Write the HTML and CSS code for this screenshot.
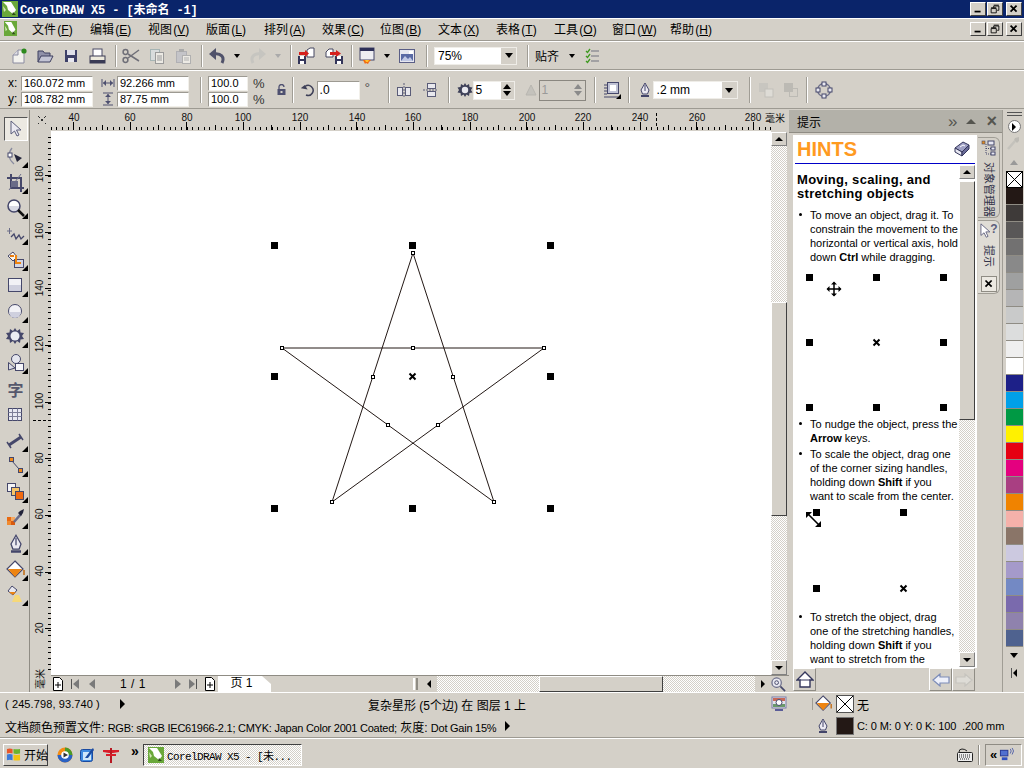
FILE: index.html
```html
<!DOCTYPE html>
<html lang="zh-CN">

<head>
    <meta charset="UTF-8">
    <title>CorelDRAW X5</title>
    <link rel="stylesheet" href="styles.css">
</head>

<body>
    <svg class="defs" xmlns="http://www.w3.org/2000/svg">
        <symbol id="logo" viewBox="0 0 16 16" preserveAspectRatio="none"><rect width="16" height="16" fill="#6aa83a"/><path d="M1 1 L9 1 L14 9 L11 13 L6 9 L5 5Z" fill="#fff"/><path d="M11 11 L14 14 L10 14Z" fill="#2c4a18"/><path d="M1 5 L4 9 L2 11Z" fill="#d5e8b8"/></symbol>
        <symbol id="min" viewBox="0 0 16 14"><rect x="4" y="9" width="7" height="2" fill="#000"/></symbol>
        <symbol id="max" viewBox="0 0 16 14"><path d="M6.5 3.5h6v5h-2M6.5 2.5h6" fill="none" stroke="#000"/><path d="M6.5 3.5v2" stroke="#000"/><path d="M3.5 6.5h6v5h-6z M3.5 5.5h6" fill="none" stroke="#000"/></symbol>
        <symbol id="close" viewBox="0 0 16 14"><path d="M4 3 L11 10 M11 3 L4 10" stroke="#000" stroke-width="2"/></symbol>
        <symbol id="new" viewBox="0 0 18 18"><path d="M3 8 L8 3 H14 V16 H3Z" fill="#f3f2ee" stroke="#8a8ba0"/><path d="M3 8h5V3" fill="#dcdbe2" stroke="#8a8ba0"/><circle cx="14" cy="4" r="2.6" fill="#2d8a1e"/></symbol>
        <symbol id="open" viewBox="0 0 18 18"><path d="M2 15V4h5l1.5 2H14v3" fill="#8f90a8" stroke="#3f4060"/><path d="M2 15 L5 9 H17 L14 15Z" fill="#c3c4d4" stroke="#3f4060"/></symbol>
        <symbol id="save" viewBox="0 0 18 18"><rect x="3" y="3" width="12" height="12" fill="#3d4068"/><rect x="5" y="3" width="8" height="5" fill="#dfe0ea"/><rect x="6" y="11" width="6" height="4" fill="#e8e8f0"/></symbol>
        <symbol id="print" viewBox="0 0 18 18"><rect x="5" y="2" width="9" height="8" fill="#fff" stroke="#4a4b66"/><rect x="2" y="9" width="15" height="7" fill="#ece9dc" stroke="#3a3b55"/><rect x="2" y="13" width="15" height="3" fill="#3a3b55"/></symbol>
        <symbol id="cut" viewBox="0 0 18 18"><path d="M6 7 L17 14 M6 11 L17 3" stroke="#6f6f78" stroke-width="1.5"/><circle cx="3.5" cy="5" r="2.4" fill="none" stroke="#6f6f78" stroke-width="1.5"/><circle cx="3.5" cy="13" r="2.4" fill="none" stroke="#6f6f78" stroke-width="1.5"/></symbol>
        <symbol id="copy" viewBox="0 0 18 18"><rect x="2.500" y="2.500" width="9" height="11" fill="#d8dcdc" stroke="#a5b4b4"/><rect x="7.500" y="5.500" width="8" height="11" fill="#eceae4" stroke="#9a9a9a"/><path d="M9 9h5M9 11h5M9 13h5" stroke="#9a9a9a"/></symbol>
        <symbol id="paste" viewBox="0 0 18 18"><rect x="2.500" y="4.500" width="10" height="11" fill="#c4c4c8" stroke="#b0b0b4"/><rect x="5" y="2" width="5" height="3" fill="#aaa"/><rect x="8.500" y="8.500" width="8" height="8" fill="#eceae4" stroke="#b0b0b0"/><path d="M10 11h5M10 13h5" stroke="#b0b0b0"/></symbol>
        <symbol id="undo" viewBox="0 0 18 18"><path d="M14 16 C17 10 13 6 6 7" fill="none" stroke="#50526a" stroke-width="3"/><path d="M1 7 L8 1 V13Z" fill="#50526a"/></symbol>
        <symbol id="redo" viewBox="0 0 18 18"><path d="M4 16 C1 10 5 6 12 7" fill="none" stroke="#c6c5c0" stroke-width="3"/><path d="M17 7 L10 1 V13Z" fill="#c6c5c0"/></symbol>
        <symbol id="import" viewBox="0 0 18 18"><path d="M10 3 L13 1 H17 V10 H10Z" fill="#fff" stroke="#444660"/><rect x="1" y="9" width="8" height="8" fill="#34365a"/><rect x="3" y="9" width="4" height="3" fill="#fff"/><rect x="3" y="14" width="4" height="3" fill="#fff"/><path d="M2 5h6V3l4 3.500-4 3.500V8H2Z" fill="#d6201c"/></symbol>
        <symbol id="export" viewBox="0 0 18 18"><path d="M1 5 L4 2 H8 V10 H1Z" fill="#fff" stroke="#444660"/><rect x="10" y="9" width="8" height="8" fill="#34365a"/><rect x="12" y="9" width="4" height="3" fill="#fff"/><rect x="12" y="14" width="4" height="3" fill="#fff"/><path d="M5 5h6V3l5 3.500-5 3.500V8H5Z" fill="#d6201c"/></symbol>
        <symbol id="launch" viewBox="0 0 18 18"><rect x="2" y="1" width="14" height="12" fill="#eeeef2" stroke="#45476a"/><rect x="2" y="1" width="14" height="3" fill="#2e3058"/><path d="M5 13h8l-2 2 -1 2-2-1-1 1Z" fill="#f26a10"/><path d="M7 13h4l-1 2H8Z" fill="#ffc02a"/></symbol>
        <symbol id="welcome" viewBox="0 0 18 18"><rect x="1.500" y="2.500" width="15" height="13" fill="#e6e7ef" stroke="#5a5e86"/><rect x="3" y="7" width="12" height="7" fill="#5a6aa4"/><path d="M3 14 L7 9 L10 12 L12 10 L15 14Z" fill="#c0c8e4"/><rect x="11" y="4" width="4" height="3" fill="#fff"/></symbol>
        <symbol id="checks" viewBox="0 0 14 16"><path d="M6 3h8M6 8h8M6 13h8" stroke="#70727e"/><path d="M1 3l1.500 1.500L5 1M1 8l1.500 1.500L5 6M1 13l1.500 1.500L5 11" fill="none" stroke="#3f9a20" stroke-width="1.300"/></symbol>
        <symbol id="wid" viewBox="0 0 14 14"><path d="M1 3v8M13 3v8M2 7h10" stroke="#4e5070"/><path d="M2 7l3-3v6ZM12 7l-3-3v6Z" fill="#4e5070"/></symbol>
        <symbol id="hei" viewBox="0 0 14 14"><path d="M2 1h10M2 13h10M7 2v10" stroke="#4e5070"/><path d="M7 2l-3 3h6ZM7 12l-3-3h6Z" fill="#4e5070"/></symbol>
        <symbol id="lock" viewBox="0 0 12 12"><rect x="1.500" y="5" width="8" height="6" fill="#4e5070"/><path d="M3 5V3a2.500 2.500 0 0 1 5 0" fill="none" stroke="#4e5070" stroke-width="1.300"/><rect x="4.500" y="7" width="2" height="2" fill="#d4d0c8"/></symbol>
        <symbol id="rotate" viewBox="0 0 14 14"><path d="M4 3.500 A5 5 0 1 1 5 12" fill="none" stroke="#3e4058" stroke-width="1.500"/><path d="M0 6h7L3.500 2Z" fill="#3e4058" transform="rotate(10 4 4)"/></symbol>
        <symbol id="mirh" viewBox="0 0 16 16"><rect x="1.500" y="5.500" width="5" height="8" fill="#e8e8ee" stroke="#5a5c78"/><rect x="9.500" y="5.500" width="5" height="8" fill="#e8e8ee" stroke="#5a5c78"/><path d="M8 1v14" stroke="#5a5c78" stroke-dasharray="2 1"/></symbol>
        <symbol id="mirv" viewBox="0 0 16 16"><rect x="5.500" y="1.500" width="8" height="5" fill="#e8e8ee" stroke="#5a5c78"/><rect x="5.500" y="9.500" width="8" height="5" fill="#e8e8ee" stroke="#5a5c78"/><path d="M1 8h14" stroke="#5a5c78" stroke-dasharray="2 1"/></symbol>
        <symbol id="gear" viewBox="0 0 16 16"><path d="M8 1l1.500 2.500L12 2l.5 3 3 .5-1.500 2.500 1.500 2.500-3 .5-.5 3-2.500-1.500L8 15l-1.500-2.500L4 14l-.5-3-3-.5L2 8 .5 5.500l3-.5L4 2l2.500 1.500Z" fill="#3e4058"/><circle cx="8" cy="8" r="3.200" fill="#e8e8ee"/></symbol>
        <symbol id="tri" viewBox="0 0 12 12"><path d="M6 1 L11 11 H1Z" fill="#c4c2bc" stroke="#b8b6b0"/></symbol>
        <symbol id="wrap" viewBox="0 0 18 18"><path d="M1 4h3M1 7h3M1 10h3M1 13h3M1 16h14" stroke="#45476a"/><rect x="4.500" y="1.500" width="11" height="11" fill="#bfc2d4" stroke="#45476a"/><rect x="7" y="4" width="6" height="6" fill="#fff"/><path d="M18 13v5h-5Z" fill="#000"/></symbol>
        <symbol id="pen" viewBox="0 0 14 16"><path d="M7 1 L11 8 L9.500 12 H4.500 L3 8Z" fill="#eceaf2" stroke="#43456a"/><path d="M7 3v6" stroke="#43456a"/><rect x="3" y="13" width="8" height="2" fill="#43456a"/></symbol>
        <symbol id="comb1" viewBox="0 0 16 16"><rect x="1" y="1" width="9" height="9" fill="#c8c6c0"/><rect x="7" y="7" width="8" height="8" fill="#dedcd6" stroke="#c2c0ba"/></symbol>
        <symbol id="comb2" viewBox="0 0 16 16"><rect x="1" y="1" width="9" height="9" fill="#bcbab4"/><rect x="6.500" y="6.500" width="8" height="8" fill="none" stroke="#bcbab4"/></symbol>
        <symbol id="nodes" viewBox="0 0 18 18"><circle cx="9" cy="9" r="6.500" fill="none" stroke="#6a6c88" stroke-width="1.300"/><rect x="7" y="1" width="4" height="4" fill="#e8e8f0" stroke="#45476a"/><rect x="7" y="13" width="4" height="4" fill="#e8e8f0" stroke="#45476a"/><rect x="1" y="7" width="4" height="4" fill="#e8e8f0" stroke="#45476a"/><rect x="13" y="7" width="4" height="4" fill="#e8e8f0" stroke="#45476a"/></symbol>
        <symbol id="t-arrow" viewBox="0 0 20 20"><path d="M5 2 L5 15 L8.500 12 L11 17 L13 16 L10.500 11 L15 11Z" fill="#eceaf2" stroke="#5c5e7c"/></symbol>
        <symbol id="t-shape" viewBox="0 0 20 20"><path d="M6 1 C2 6 2 12 8 17" fill="none" stroke="#8a8ca0" stroke-width="1.300"/><rect x="2" y="6" width="4" height="4" fill="#fff" stroke="#45476a"/><path d="M8 7 L16 11 L11 15Z" fill="#23243a"/></symbol>
        <symbol id="t-crop" viewBox="0 0 20 20"><path d="M5 1v14h13M1 5h14v14" fill="none" stroke="#45476a" stroke-width="2"/><path d="M15 1 L3 17" stroke="#6a6c88"/><rect x="5" y="8" width="7" height="6" fill="#6a6c88"/></symbol>
        <symbol id="t-zoom" viewBox="0 0 20 20"><circle cx="8" cy="8" r="6" fill="#d8d9e4" stroke="#45476a" stroke-width="1.500"/><path d="M3 8a5 5 0 0 1 10 0Z" fill="#fff"/><path d="M12 12 L18 18" stroke="#111" stroke-width="2.500"/></symbol>
        <symbol id="t-free" viewBox="0 0 20 20"><path d="M1 7h5M3.500 4v6" stroke="#6a6c88"/><path d="M5 13 L8 10 L10 15 L13 11 L15 15 L18 12" fill="none" stroke="#45476a" stroke-width="1.300"/></symbol>
        <symbol id="t-smart" viewBox="0 0 20 20"><path d="M2 6 L7 2 L11 7 L7 11Z" fill="#f6f4ee" stroke="#45476a"/><path d="M4 6h4" stroke="#e67a12" stroke-width="2"/><rect x="8.500" y="9.500" width="9" height="8" fill="#d4d6e4" stroke="#45476a"/><path d="M10 5v8h5" fill="none" stroke="#ee8410" stroke-width="2"/></symbol>
        <symbol id="t-rect" viewBox="0 0 20 20"><rect x="2.500" y="2.500" width="13" height="13" fill="#f2f2f6" stroke="#45476a"/><rect x="3" y="9" width="12" height="6" fill="#cfd0de"/></symbol>
        <symbol id="t-ell" viewBox="0 0 20 20"><circle cx="9" cy="9" r="6.500" fill="#f2f2f6" stroke="#45476a"/><path d="M3 10h12a6 6 0 0 1-12 0Z" fill="#cfd0de"/></symbol>
        <symbol id="t-poly" viewBox="0 0 20 20"><path d="M9 1l2 3 3-2 .5 3.500 3.500.5-2 3 2 3-3.500.5-.5 3.500-3-2-2 3-2-3-3 2-.5-3.500L0 12l2-3-2-3 3.500-.5L4 2l3 2Z" fill="#45476a"/><circle cx="9" cy="9" r="4.500" fill="#ebecf3"/></symbol>
        <symbol id="t-basic" viewBox="0 0 20 20"><circle cx="10" cy="6" r="4.500" fill="#e4e5ee" stroke="#45476a"/><path d="M2.500 9.500 L9 15 L2.500 17Z" fill="#d8d9e4" stroke="#45476a"/><rect x="9.500" y="10.500" width="8" height="7" fill="#f6f6fa" stroke="#45476a"/></symbol>
        <symbol id="t-table" viewBox="0 0 20 20"><rect x="2.500" y="3.500" width="13" height="12" fill="#e8e9f2" stroke="#45476a"/><path d="M2.500 7.500h13M2.500 11.500h13M6.500 3.500v12M11.500 3.500v12" stroke="#7c7e98"/></symbol>
        <symbol id="t-dim" viewBox="0 0 20 20"><path d="M3 14 L15 6" stroke="#45476a" stroke-width="3"/><path d="M1 11l4 6M13 3l4 6" stroke="#45476a" stroke-width="1.500"/></symbol>
        <symbol id="t-conn" viewBox="0 0 20 20"><rect x="3.500" y="1.500" width="4" height="4" fill="#f08a1a" stroke="#45476a"/><rect x="12.500" y="12.500" width="4" height="4" fill="#f08a1a" stroke="#45476a"/><path d="M6 5 L13 13" stroke="#45476a"/></symbol>
        <symbol id="t-blend" viewBox="0 0 20 20"><rect x="1.500" y="1.500" width="8" height="8" fill="#f4f4f6" stroke="#45476a"/><rect x="5.500" y="5.500" width="8" height="8" fill="#f6c468" stroke="#45476a"/><rect x="9.500" y="9.500" width="8" height="8" fill="#f06a10" stroke="#45476a"/></symbol>
        <symbol id="t-drop" viewBox="0 0 20 20"><rect x="1" y="9" width="4" height="4" fill="#e86a12"/><rect x="5" y="9" width="4" height="4" fill="#f6a860"/><rect x="1" y="13" width="4" height="4" fill="#f08a30"/><rect x="5" y="13" width="4" height="4" fill="#d85a10"/><path d="M8 14 L15 6" stroke="#6a6c88" stroke-width="2.500"/><path d="M14 3 L18 1 L17 5 L15 8 L12 5Z" fill="#23243a"/></symbol>
        <symbol id="bucket" viewBox="0 0 20 20"><path d="M9 1 L17 9 L9 17 L1 9Z" fill="#fff" stroke="#45476a" stroke-width="1.200"/><path d="M2 9h14l-7 8Z" fill="#ee8410"/><path d="M18 10v5" stroke="#c26a10" stroke-width="1.500"/></symbol>
        <symbol id="t-ifill" viewBox="0 0 20 20"><path d="M6 1 L11 5 L7 10 L2 6Z" fill="#e8e8f0" stroke="#45476a"/><path d="M3 7h7l-3 3Z" fill="#ee8410"/><path d="M9 10h4l3 7H6Z" fill="#f6d878"/></symbol>
        <symbol id="page" viewBox="0 0 12 14"><path d="M1.500 .5H7.500L10.500 3.500V13.500H1.500Z" fill="#fff" stroke="#000"/><path d="M6 5v6M3 8h6" stroke="#000"/></symbol>
        <symbol id="zoomctl" viewBox="0 0 16 16"><circle cx="6" cy="6" r="5" fill="#e8e8f0" stroke="#6a6c88" stroke-width="1.300"/><circle cx="6" cy="6" r="2" fill="none" stroke="#45476a"/><path d="M10 10 L15 15" stroke="#45476a" stroke-width="1.800"/></symbol>
        <symbol id="home" viewBox="0 0 18 18"><path d="M1 9 L9 1 L17 9 H14 V16 H4 V9Z" fill="#fff" stroke="#35375c" stroke-width="1.400"/><path d="M4 9h10" stroke="#35375c"/></symbol>
        <symbol id="back" viewBox="0 0 18 14"><path d="M1 7 L8 1 V4 H17 V10 H8 V13Z" fill="#eef0fa" stroke="#7c8cb8" stroke-width="1.200"/></symbol>
        <symbol id="fwd" viewBox="0 0 18 14"><path d="M17 7 L10 1 V4 H1 V10 H10 V13Z" fill="#dedcd6" stroke="#c6c4be" stroke-width="1.200"/></symbol>
        <symbol id="book" viewBox="0 0 16 16"><path d="M1 7 L9 1 L15 4 L8 11Z" fill="#9ea0c4" stroke="#33355a"/><path d="M1 7 L8 11 V15 L1 11Z" fill="#e8e8f2" stroke="#33355a"/><path d="M8 11 L15 4 V8 L8 15Z" fill="#6a6c98" stroke="#33355a"/><path d="M6 6l3-2 2 1" fill="none" stroke="#fff"/></symbol>
        <symbol id="mgr" viewBox="0 0 16 16"><rect x="1" y="1" width="3" height="3" fill="#e08a20" stroke="#45476a" stroke-width=".6"/><rect x="7" y="1" width="6" height="4" fill="#e8e8f2" stroke="#45476a"/><rect x="10" y="7" width="4" height="3" fill="#e8e8f2" stroke="#45476a"/><rect x="10" y="12" width="4" height="3" fill="#e8e8f2" stroke="#45476a"/><path d="M5 4v10h5M5 8.500h5" fill="none" stroke="#45476a" stroke-dasharray="1 1"/></symbol>
        <symbol id="help" viewBox="0 0 12 18"><path d="M2 1 L2 14 L5.500 11 L8 16 L10 15 L7.500 10 L12 10Z" fill="#fff" stroke="#5c5e7c"/></symbol>
        <symbol id="dropper" viewBox="0 0 14 14"><path d="M1 13 L8 5" stroke="#c4c2bc" stroke-width="2.500"/><path d="M8 2 L12 1 L12 5 L10 7 L7 4Z" fill="#bdbbb5"/></symbol>
        <symbol id="scope" viewBox="0 0 16 16"><rect x="1" y="1" width="14" height="11" fill="#e4e4ec" stroke="#7a7ca8"/><rect x="2" y="2" width="12" height="3" fill="#c86a5a"/><rect x="2" y="8" width="12" height="3" fill="#6a9a6a"/><circle cx="8" cy="6.500" r="3" fill="#fff" stroke="#45476a"/><rect x="4" y="13" width="8" height="2" fill="#5a5c98"/></symbol>
        <symbol id="flag" viewBox="0 0 16 16"><path d="M1 2q3-1 6 0v5q-3-1-6 0Z" fill="#e8572a"/><path d="M8 2q3 1 7 0v5q-4 1-7 0Z" fill="#6cb42e"/><path d="M1 8q3-1 6 0v6q-3-1-6 0Z" fill="#3b79d8"/><path d="M8 8q3 1 7 0v6q-4 1-7 0Z" fill="#f2c312"/></symbol>
        <symbol id="wmp" viewBox="0 0 16 16"><circle cx="8" cy="8" r="7.500" fill="#f48c14"/><path d="M8 .5A7.500 7.500 0 0 1 15.500 8H11A3 3 0 0 0 8 5Z" fill="#4a9a2a"/><path d="M.5 8A7.500 7.500 0 0 0 15.500 8H11a3 3 0 0 1-6 0Z" fill="#2a62c4"/><circle cx="8" cy="8" r="3.800" fill="#fff"/><path d="M6.500 5.500 L11 8 L6.500 10.500Z" fill="#333"/></symbol>
        <symbol id="ie" viewBox="0 0 16 16"><rect x="1.500" y="2.500" width="12" height="12" rx="2" fill="#3f8ae0" stroke="#1a4aa0"/><path d="M4 5h8v8H4Z" fill="#cfe6fa"/><path d="M6 11 L12 3 L14 1 L15 3 L9 11Z" fill="#1a4aa0"/></symbol>
        <symbol id="fly" viewBox="0 0 16 16"><path d="M0 3h16v2l-6 1H6L0 5Z" fill="#d81e2a"/><path d="M7 1h2v15H7Z" fill="#b81822"/><path d="M3 7h10v2H3Z" fill="#d81e2a"/></symbol>
        <symbol id="kbd" viewBox="0 0 16 16"><rect x=".5" y="5.500" width="15" height="9" rx="1" fill="#eee" stroke="#222"/><path d="M2 8h12M2 10h12M3 12h10" stroke="#222" stroke-dasharray="1 1"/><path d="M2 5q0-3 3-3t5 2" fill="none" stroke="#222"/></symbol>
        <symbol id="net" viewBox="0 0 16 16"><rect x="1" y="3" width="9" height="7" fill="#2a3a90"/><rect x="2" y="4" width="7" height="5" fill="#5070d0"/><rect x="3" y="11" width="6" height="3" fill="#3050c0"/><path d="M12 2q2 2 0 5M14 1q3 3 0 7" fill="none" stroke="#5060a8"/></symbol>
    </svg>

    <div class="app">
        <div class="titlebar">
            <svg class="title-logo"><use href="#logo"/></svg>
            <span class="title-text">CorelDRAW X5 - [未命名 -1]</span>
            <div class="win-btns">
                <span class="win-btn"><svg><use href="#min"/></svg></span>
                <span class="win-btn"><svg><use href="#max"/></svg></span>
                <span class="win-btn win-close"><svg><use href="#close"/></svg></span>
            </div>
        </div>

        <div class="menubar">
            <svg class="menu-logo"><use href="#logo"/></svg>
            <div class="menu">
                <span class="menu-item">文件 (<u>F</u>)</span>
                <span class="menu-item">编辑 (<u>E</u>)</span>
                <span class="menu-item">视图 (<u>V</u>)</span>
                <span class="menu-item">版面 (<u>L</u>)</span>
                <span class="menu-item">排列 (<u>A</u>)</span>
                <span class="menu-item">效果 (<u>C</u>)</span>
                <span class="menu-item">位图 (<u>B</u>)</span>
                <span class="menu-item">文本 (<u>X</u>)</span>
                <span class="menu-item">表格 (<u>T</u>)</span>
                <span class="menu-item">工具 (<u>O</u>)</span>
                <span class="menu-item">窗口 (<u>W</u>)</span>
                <span class="menu-item">帮助 (<u>H</u>)</span>
            </div>
            <div class="win-btns">
                <span class="win-btn"><svg><use href="#min"/></svg></span>
                <span class="win-btn"><svg><use href="#max"/></svg></span>
                <span class="win-btn win-close"><svg><use href="#close"/></svg></span>
            </div>
        </div>

        <div class="toolbar">
            <span class="tb"><svg class="ico"><use href="#new"/></svg></span>
            <span class="tb"><svg class="ico"><use href="#open"/></svg></span>
            <span class="tb"><svg class="ico"><use href="#save"/></svg></span>
            <span class="tb"><svg class="ico"><use href="#print"/></svg></span>
            <span class="sep"></span>
            <span class="tb"><svg class="ico"><use href="#cut"/></svg></span>
            <span class="tb"><svg class="ico"><use href="#copy"/></svg></span>
            <span class="tb"><svg class="ico"><use href="#paste"/></svg></span>
            <span class="sep"></span>
            <span class="tb"><svg class="ico"><use href="#undo"/></svg></span>
            <span class="tb-arrow"></span>
            <span class="tb tb-gap"><svg class="ico"><use href="#redo"/></svg></span>
            <span class="tb-arrow tb-arrow-off"></span>
            <span class="sep"></span>
            <span class="tb"><svg class="ico"><use href="#import"/></svg></span>
            <span class="tb tb-gap2"><svg class="ico"><use href="#export"/></svg></span>
            <span class="sep sep-4"></span>
            <span class="tb"><svg class="ico"><use href="#launch"/></svg></span>
            <span class="tb-arrow"></span>
            <span class="tb"><svg class="ico"><use href="#welcome"/></svg></span>
            <span class="sep sep-6"></span>
            <div class="combo combo-zoom"><span class="combo-val">75%</span><span class="combo-btn"></span></div>
            <span class="sep sep-10"></span>
            <span class="snap">贴齐</span>
            <span class="tb-arrow tb-arrow-snap"></span>
            <span class="tb"><svg class="checks"><use href="#checks"/></svg></span>
        </div>

        <div class="propbar">
            <div class="two-rows pos-col">
                <div class="row"><span class="lbl">x:</span><span class="field field-w72">160.072 mm</span></div>
                <div class="row"><span class="lbl">y:</span><span class="field field-w72">108.782 mm</span></div>
            </div>
            <div class="two-rows size-col">
                <div class="row"><svg class="ico12"><use href="#wid"/></svg><span class="field field-w72">92.266 mm</span></div>
                <div class="row"><svg class="ico12"><use href="#hei"/></svg><span class="field field-w72">87.75 mm</span></div>
            </div>
            <span class="vsep vsep-l11"></span>
            <div class="two-rows scale-col">
                <div class="row"><span class="field field-w40">100.0</span><span class="pct">%</span></div>
                <div class="row"><span class="field field-w40">100.0</span><span class="pct">%</span></div>
            </div>
            <svg class="lock"><use href="#lock"/></svg>
            <span class="vsep vsep-l4"></span>
            <svg class="ico14 rot"><use href="#rotate"/></svg>
            <span class="field field-rot">.0</span>
            <span class="deg">°</span>
            <span class="vsep vsep-l15"></span>
            <svg class="ico16 mir1"><use href="#mirh"/></svg>
            <svg class="ico16 mir2"><use href="#mirv"/></svg>
            <span class="vsep vsep-l10"></span>
            <svg class="ico16 star-ico"><use href="#gear"/></svg>
            <div class="spin"><span class="spin-val">5</span><span class="spin-btn"><i class="up"></i><i class="down"></i></span></div>
            <svg class="tri-ico"><use href="#tri"/></svg>
            <div class="spin spin-off"><span class="spin-val">1</span><span class="spin-btn"><i class="up"></i><i class="down"></i></span></div>
            <span class="vsep vsep-l8"></span>
            <svg class="ico wrap-ico"><use href="#wrap"/></svg>
            <span class="vsep vsep-l7"></span>
            <svg class="pen-ico"><use href="#pen"/></svg>
            <div class="combo combo-pen"><span class="combo-val">.2 mm</span><span class="combo-btn"></span></div>
            <span class="vsep vsep-l11"></span>
            <svg class="ico16 comb1"><use href="#comb1"/></svg>
            <svg class="ico16 comb2"><use href="#comb2"/></svg>
            <span class="vsep vsep-l7"></span>
            <svg class="ico nodes-ico"><use href="#nodes"/></svg>
        </div>

        <div class="workspace">
            <div class="toolbox">
                <span class="tool tool-on"><svg class="ico20"><use href="#t-arrow"/></svg></span>
                <span class="tool tool-first fly"><svg class="ico20"><use href="#t-shape"/></svg></span>
                <span class="tool fly"><svg class="ico20"><use href="#t-crop"/></svg></span>
                <span class="tool fly"><svg class="ico20"><use href="#t-zoom"/></svg></span>
                <span class="tool fly"><svg class="ico20"><use href="#t-free"/></svg></span>
                <span class="tool fly"><svg class="ico20"><use href="#t-smart"/></svg></span>
                <span class="tool fly"><svg class="ico20"><use href="#t-rect"/></svg></span>
                <span class="tool fly"><svg class="ico20"><use href="#t-ell"/></svg></span>
                <span class="tool fly"><svg class="ico20"><use href="#t-poly"/></svg></span>
                <span class="tool fly"><svg class="ico20"><use href="#t-basic"/></svg></span>
                <span class="tool tool-text">字</span>
                <span class="tool"><svg class="ico20"><use href="#t-table"/></svg></span>
                <span class="tool fly"><svg class="ico20"><use href="#t-dim"/></svg></span>
                <span class="tool fly"><svg class="ico20"><use href="#t-conn"/></svg></span>
                <span class="tool fly"><svg class="ico20"><use href="#t-blend"/></svg></span>
                <span class="tool fly"><svg class="ico20"><use href="#t-drop"/></svg></span>
                <span class="tool fly"><svg class="ico20"><use href="#pen"/></svg></span>
                <span class="tool fly"><svg class="ico20"><use href="#bucket"/></svg></span>
                <span class="tool fly"><svg class="ico20"><use href="#t-ifill"/></svg></span>
            </div>

            <div class="drawing">
                <svg class="ruler-top" viewBox="30 110 759 21" shape-rendering="crispEdges">
                    <path d="M50.800 128.500H771" stroke="#000" stroke-width="3" stroke-dasharray="1 4.665"/>
                    <path d="M73 126H771" stroke="#000" stroke-width="8" stroke-dasharray="1 55.650"/>
                    <path d="M101.500 127.500H771" stroke="#000" stroke-width="5" stroke-dasharray="1 55.650"/>
                    <path d="M656.500 113V128" stroke="#000" stroke-dasharray="3 2"/>
                    <path d="M38 116l8 8M46 116l-8 8" stroke="#333" stroke-dasharray="1 1"/>
                    <g class="ruler-nums">
                        <text x="74" y="121">40</text><text x="130" y="121">60</text><text x="187" y="121">80</text>
                        <text x="243" y="121">100</text><text x="300" y="121">120</text><text x="357" y="121">140</text>
                        <text x="413" y="121">160</text><text x="470" y="121">180</text><text x="527" y="121">200</text>
                        <text x="583" y="121">220</text><text x="640" y="121">240</text><text x="697" y="121">260</text>
                        <text x="753" y="121">280</text>
                        <text class="unit" x="775" y="122">毫米</text>
                    </g>
                </svg>
                <div class="draw-mid">
                    <svg class="ruler-left" viewBox="30 131 21 561" shape-rendering="crispEdges">
                        <path d="M49 136.800V672" stroke="#000" stroke-width="3" stroke-dasharray="1 4.665"/>
                        <path d="M47.500 175V672" stroke="#000" stroke-width="6" stroke-dasharray="1 55.650"/>
                        <path d="M33 420.500H50" stroke="#000" stroke-dasharray="3 2"/>
                        <g class="ruler-nums">
                            <text transform="rotate(-90 43 174)" x="43" y="174">180</text>
                            <text transform="rotate(-90 43 231)" x="43" y="231">160</text>
                            <text transform="rotate(-90 43 288)" x="43" y="288">140</text>
                            <text transform="rotate(-90 43 344)" x="43" y="344">120</text>
                            <text transform="rotate(-90 43 401)" x="43" y="401">100</text>
                            <text transform="rotate(-90 43 458)" x="43" y="458">80</text>
                            <text transform="rotate(-90 43 514)" x="43" y="514">60</text>
                            <text transform="rotate(-90 43 571)" x="43" y="571">40</text>
                            <text transform="rotate(-90 43 628)" x="43" y="628">20</text>
                            <text class="unit" transform="rotate(-90 44 679)" x="44" y="679">毫米</text>
                        </g>
                    </svg>
                    <div class="draw-right">
                        <div class="draw-main">
                            <svg class="canvas" viewBox="51 131 720 544" shape-rendering="geometricPrecision">
                                <polygon points="413,253 494,502 282,348 544,348 332,502" fill="none" stroke="#231815" stroke-width="1"/>
                                <g fill="#000">
                                    <rect x="271" y="242" width="7" height="7"/><rect x="409" y="242" width="7" height="7"/><rect x="547" y="242" width="7" height="7"/>
                                    <rect x="271" y="373" width="7" height="7"/><rect x="547" y="373" width="7" height="7"/>
                                    <rect x="271" y="505" width="7" height="7"/><rect x="409" y="505" width="7" height="7"/><rect x="547" y="505" width="7" height="7"/>
                                </g>
                                <path d="M409.500 373.500l6 6M415.500 373.500l-6 6" stroke="#000" stroke-width="2"/>
                                <g fill="#fff" stroke="#000" shape-rendering="crispEdges">
                                    <rect x="411.500" y="251.500" width="3" height="3"/><rect x="492.500" y="500.500" width="3" height="3"/><rect x="280.500" y="346.500" width="3" height="3"/>
                                    <rect x="542.500" y="346.500" width="3" height="3"/><rect x="330.500" y="500.500" width="3" height="3"/><rect x="411.500" y="346.500" width="3" height="3"/>
                                    <rect x="371.500" y="375.500" width="3" height="3"/><rect x="451.500" y="375.500" width="3" height="3"/><rect x="386.500" y="423.500" width="3" height="3"/><rect x="436.500" y="423.500" width="3" height="3"/>
                                </g>
                            </svg>
                            <div class="vscroll">
                                <span class="sb-btn sb-btn-first"><i class="arr-up"></i></span>
                                <span class="hatch hatch-a"></span>
                                <span class="thumb thumb-v"></span>
                                <span class="hatch hatch-b"></span>
                                <span class="sb-btn"><i class="arr-down"></i></span>
                            </div>
                        </div>
                        <div class="pagebar">
                            <svg class="page-ico"><use href="#page"/></svg>
                            <span class="nav-first"><i class="bar"></i><i class="arr-left arr-grey"></i></span>
                            <i class="arr-left arr-grey nav-prev"></i>
                            <span class="page-count">1 / 1</span>
                            <i class="arr-right arr-grey nav-next"></i>
                            <span class="nav-last"><i class="arr-right arr-grey"></i><i class="bar"></i></span>
                            <svg class="page-ico page-ico2"><use href="#page"/></svg>
                            <span class="page-tab">页 1</span>
                            <span class="grip"></span>
                            <span class="hs-btn"><i class="arr-left"></i></span>
                            <span class="hatch hatch-c"></span>
                            <span class="thumb thumb-h"></span>
                            <span class="hatch hatch-d"></span>
                            <span class="hs-btn"><i class="arr-right"></i></span>
                            <svg class="zoom-ctl"><use href="#zoomctl"/></svg>
                        </div>
                    </div>
                </div>
            </div>

            <div class="docker">
                <div class="docker-head">
                    <span class="docker-title">提示</span>
                    <span class="docker-ctl ctl-more">»</span>
                    <i class="ctl-up"></i>
                    <span class="docker-ctl ctl-x">×</span>
                </div>
                <div class="docker-body">
                    <div class="panel">
                        <div class="hints-head">
                            <span class="hints-word">HINTS</span>
                            <svg class="book"><use href="#book"/></svg>
                        </div>
                        <div class="hints-main">
                            <div class="hints-text">
                                <h2>Moving, scaling, and<br>stretching objects</h2>
                                <ul>
                                    <li>To move an object, drag it. To<br>constrain the movement to the<br>horizontal or vertical axis, hold<br>down <b>Ctrl</b> while dragging.</li>
                                </ul>
                                <svg class="diagram diagram-move" viewBox="795 264 164 153">
                                    <g fill="#000">
                                        <rect x="806" y="274" width="7" height="7"/><rect x="873" y="274" width="7" height="7"/><rect x="940" y="274" width="7" height="7"/>
                                        <rect x="806" y="339" width="7" height="7"/><rect x="940" y="339" width="7" height="7"/>
                                        <rect x="806" y="404" width="7" height="7"/><rect x="873" y="404" width="7" height="7"/><rect x="940" y="404" width="7" height="7"/>
                                    </g>
                                    <path d="M873.500 339.500l6 6M879.500 339.500l-6 6" stroke="#000" stroke-width="2"/>
                                    <path d="M827.500 289h13M834 282.500v13" stroke="#000" stroke-width="1.500"/>
                                    <path d="M834 281.500l3 3h-6ZM834 296.500l3-3h-6ZM826.500 289l3 3v-6ZM841.500 289l-3 3v-6Z" fill="#000"/>
                                </svg>
                                <ul>
                                    <li>To nudge the object, press the<br><b>Arrow</b> keys.</li>
                                    <li>To scale the object, drag one<br>of the corner sizing handles,<br>holding down <b>Shift</b> if you<br>want to scale from the center.</li>
                                </ul>
                                <svg class="diagram diagram-scale" viewBox="795 503 164 107">
                                    <g fill="#000">
                                        <rect x="813" y="509" width="7" height="7"/><rect x="900" y="509" width="7" height="7"/>
                                        <rect x="813" y="585" width="7" height="7"/>
                                    </g>
                                    <path d="M900.500 585.500l6 6M906.500 585.500l-6 6" stroke="#000" stroke-width="2"/>
                                    <path d="M808 514 L819 525" stroke="#000" stroke-width="1.600"/>
                                    <path d="M806 512h6l-6 6ZM821 527h-6l6-6Z" fill="#000"/>
                                </svg>
                                <ul>
                                    <li>To stretch the object, drag<br>one of the stretching handles,<br>holding down <b>Shift</b> if you<br>want to stretch from the</li>
                                </ul>
                            </div>
                            <div class="panel-scroll">
                                <span class="sb-btn sb-btn-top"><i class="arr-up"></i></span>
                                <span class="thumb thumb-p"></span>
                                <span class="hatch hatch-p"></span>
                                <span class="sb-btn"><i class="arr-down"></i></span>
                            </div>
                        </div>
                        <div class="panel-nav">
                            <span class="nav-btn nav-home"><svg><use href="#home"/></svg></span>
                            <span class="nav-btn nav-back"><svg><use href="#back"/></svg></span>
                            <span class="nav-btn"><svg><use href="#fwd"/></svg></span>
                        </div>
                    </div>
                    <div class="dock-tabs">
                        <div class="dock-tab tab-mgr">
                            <svg class="tab-ico"><use href="#mgr"/></svg>
                            <span class="tab-text">对象管理器</span>
                        </div>
                        <div class="dock-tab tab-hint">
                            <span class="help-ico"><svg><use href="#help"/></svg><b>?</b></span>
                            <span class="tab-text">提示</span>
                            <span class="tab-close"><svg><use href="#close"/></svg></span>
                        </div>
                    </div>
                </div>
            </div>

            <div class="palette">
                <span class="pal-lines"></span>
                <span class="pal-play"><i class="arr-right"></i></span>
                <svg class="pal-drop"><use href="#dropper"/></svg>
                <i class="pal-up"></i>
                <span class="swatch-none"></span>
                <div class="swatches">
                    <span class="c01"></span><span class="c02"></span><span class="c03"></span><span class="c04"></span><span class="c05"></span>
                    <span class="c06"></span><span class="c07"></span><span class="c08"></span><span class="c09"></span><span class="c10"></span>
                    <span class="c11"></span><span class="c12"></span><span class="c13"></span><span class="c14"></span><span class="c15"></span>
                    <span class="c16"></span><span class="c17"></span><span class="c18"></span><span class="c19"></span><span class="c20"></span>
                    <span class="c21"></span><span class="c22"></span><span class="c23"></span><span class="c24"></span><span class="c25"></span>
                    <span class="c26"></span><span class="c27"></span>
                </div>
                <i class="pal-down"></i>
                <span class="pal-end"><i class="bar"></i><i class="arr-left"></i></span>
            </div>
        </div>

        <div class="status">
            <div class="status-row">
                <span class="coords">( 245.798, 93.740 )</span>
                <i class="arr-right st-arr"></i>
                <span class="obj-info">复杂星形 (5个边) 在 图层 1 上</span>
                <svg class="scope"><use href="#scope"/></svg>
                <span class="st-tick"></span>
                <svg class="st-bucket"><use href="#bucket"/></svg>
                <span class="st-none"></span>
                <span class="st-val">无</span>
            </div>
            <div class="status-row">
                <span class="profile">文档颜色预置文件: <span class="lat">RGB: sRGB IEC61966-2.1; CMYK: Japan Color 2001 Coated;</span> 灰度: <span class="lat">Dot Gain 15%</span></span>
                <i class="arr-right st-arr"></i>
                <svg class="st-pen"><use href="#pen"/></svg>
                <span class="st-black"></span>
                <span class="st-val st-cmyk">C: 0 M: 0 Y: 0 K: 100 &nbsp;.200 mm</span>
            </div>
        </div>

        <div class="taskbar">
            <span class="start"><svg class="flag"><use href="#flag"/></svg>开始</span>
            <svg class="quick q1"><use href="#wmp"/></svg>
            <svg class="quick q2"><use href="#ie"/></svg>
            <svg class="quick q3"><use href="#fly"/></svg>
            <span class="more">»</span>
            <span class="task"><svg class="task-logo"><use href="#logo"/></svg><span class="task-text">CorelDRAW X5 - [未...</span></span>
            <svg class="kbd"><use href="#kbd"/></svg>
            <span class="tray-sep"></span>
            <span class="tray"><span class="tray-more">«</span><svg class="net"><use href="#net"/></svg></span>
        </div>
    </div>
</body>

</html>
```

FILE: styles.css
```css
* {
    margin: 0;
    padding: 0;
    box-sizing: border-box;
}

body {
    font-family: "Liberation Sans", "Noto Sans CJK SC", sans-serif;
    font-size: 11px;
    background-color: #d4d0c8;
    color: #000;
    overflow: hidden;
}

i {
    display: block;
    font-style: normal;
}

svg {
    display: block;
    flex: none;
}

.defs {
    width: 0;
    height: 0;
}

.app {
    width: 1024px;
    height: 768px;
    display: flex;
    flex-direction: column;
    overflow: hidden;
}

/* title and menu */
.titlebar {
    height: 18px;
    flex: none;
    background-color: #0a246a;
    display: flex;
    align-items: center;
    padding: 0 2px 0 2px;
}

.title-logo {
    width: 16px;
    height: 16px;
}

.title-text {
    margin-left: 2px;
    color: #fff;
    font-family: "Liberation Mono", "Noto Sans CJK SC", monospace;
    font-weight: bold;
    font-size: 12px;
    letter-spacing: -0.1px;
}

.win-btns {
    margin-left: auto;
    display: flex;
    gap: 1px;
}

.win-btn {
    width: 16px;
    height: 14px;
    background-color: #d4d0c8;
    border: 1px solid;
    border-color: #fff #404040 #404040 #fff;
}

.win-btn svg {
    width: 14px;
    height: 12px;
}

.win-close {
    margin-left: 2px;
}

.menubar {
    height: 23px;
    flex: none;
    display: flex;
    align-items: center;
    padding: 0 2px 2px 4px;
    border-top: 1px solid #fff;
    border-bottom: 1px solid #9d9a92;
    box-shadow: 0 1px 0 #fff;
}

.menu-logo {
    width: 13px;
    height: 15px;
}

.menu {
    display: flex;
    margin-left: 15px;
}

.menu-item {
    width: 58px;
    font-size: 12px;
    white-space: nowrap;
    word-spacing: -2px;
}

.menu-item u {
    text-decoration: underline;
}

/* standard toolbar */
.toolbar {
    height: 29px;
    flex: none;
    display: flex;
    align-items: center;
    padding: 1px 0 0 6px;
    border-bottom: 1px solid #9d9a92;
    box-shadow: 0 1px 0 #fff;
    position: relative;
}

.tb {
    width: 26px;
    height: 22px;
    display: flex;
    align-items: center;
    justify-content: center;
}

.tb-gap {
    margin-left: 1px;
}

.tb-gap2 {
    margin-left: 2px;
}

.ico {
    width: 18px;
    height: 18px;
}

.ico12 {
    width: 14px;
    height: 14px;
    margin-right: 2px;
}

.ico14 {
    width: 14px;
    height: 14px;
}

.ico16 {
    width: 16px;
    height: 16px;
}

.ico20 {
    width: 20px;
    height: 20px;
}

.checks {
    width: 14px;
    height: 16px;
}

.tb-arrow {
    width: 14px;
    height: 22px;
    display: flex;
    align-items: center;
    justify-content: center;
}

.tb-arrow::before {
    content: "";
    border-left: 3.5px solid transparent;
    border-right: 3.5px solid transparent;
    border-top: 4px solid #000;
}

.tb-arrow-off::before {
    border-top-color: #aaa;
}

.tb-arrow-snap {
    margin-left: 4px;
}

.sep {
    width: 2px;
    height: 22px;
    margin: 0 1px 0 5px;
    background-color: #fff;
    border-left: 1px solid #a09d95;
}

.sep-4 {
    margin-left: 4px;
}

.sep-6 {
    margin-left: 6px;
    margin-right: 6px;
}

.sep-10 {
    margin-left: 10px;
    margin-right: 6px;
}

.snap {
    width: 26px;
    font-size: 12px;
}

.combo {
    display: flex;
    align-items: center;
    background-color: #fff;
    border: 1px solid #efede8;
    font-size: 12px;
}

.combo-zoom {
    width: 83px;
    height: 18px;
}

.combo-pen {
    width: 85px;
    height: 18px;
    margin-left: 1px;
}

.combo-val {
    flex: 1;
    padding-left: 3px;
}

.combo-btn {
    width: 15px;
    height: 100%;
    background-color: #d4d0c8;
    display: flex;
    align-items: center;
    justify-content: center;
}

.combo-btn::before {
    content: "";
    border-left: 4px solid transparent;
    border-right: 4px solid transparent;
    border-top: 5px solid #000;
}

/* property bar */
.propbar {
    height: 39px;
    flex: none;
    display: flex;
    align-items: center;
    padding: 2px 0 0 8px;
    border-bottom: 1px solid #9d9a92;
}

.two-rows {
    display: flex;
    flex-direction: column;
    gap: 2px;
    margin-top: 2px;
}

.row {
    display: flex;
    align-items: center;
    height: 14px;
}

.lbl {
    width: 13px;
    font-size: 12px;
}

.size-col {
    margin-left: 8px;
}

.size-col .ico12 {
    margin-right: 2px;
}

.size-col .field {
    margin-left: 0;
}

.field {
    display: block;
    height: 15px;
    line-height: 13px;
    padding-left: 2px;
    background-color: #fff;
    border: 1px solid;
    border-color: #9d9a92 #f2f0ea #f2f0ea #9d9a92;
    font-size: 11px;
    white-space: nowrap;
}

.field-w72 {
    width: 72px;
}

.field-w40 {
    width: 40px;
}

.scale-col {
    margin-left: 0;
}

.pct {
    margin-left: 5px;
    font-size: 13px;
    color: #333;
}

.lock {
    width: 12px;
    height: 12px;
    margin-left: 11px;
}

.vsep {
    width: 2px;
    height: 26px;
    background-color: #fff;
    border-left: 1px solid #a09d95;
    margin-right: 6px;
}

.vsep-l4 {
    margin-left: 4px;
}

.vsep-l7 {
    margin-left: 7px;
}

.vsep-l8 {
    margin-left: 8px;
}

.vsep-l10 {
    margin-left: 10px;
}

.vsep-l11 {
    margin-left: 11px;
}

.vsep-l15 {
    margin-left: 15px;
}

.rot {
    margin-left: 1px;
}

.field-rot {
    width: 43px;
    height: 19px;
    line-height: 17px;
    margin-left: 2px;
    font-size: 12px;
}

.deg {
    margin-left: 5px;
    width: 8px;
    font-size: 14px;
    color: #555;
    align-self: flex-start;
    margin-top: 8px;
}

.mir2 {
    margin-left: 10px;
}

.star-ico {
    margin-left: 1px;
}

.spin {
    width: 42px;
    height: 19px;
    display: flex;
    background-color: #fff;
    border: 1px solid #efede8;
    font-size: 12px;
}

.spin-val {
    flex: 1;
    padding-left: 2px;
    line-height: 17px;
}

.spin-btn {
    width: 13px;
    background-color: #d4d0c8;
    display: flex;
    flex-direction: column;
    align-items: center;
    justify-content: center;
    gap: 2px;
}

.up {
    border-left: 4px solid transparent;
    border-right: 4px solid transparent;
    border-bottom: 5px solid #000;
}

.down {
    border-left: 4px solid transparent;
    border-right: 4px solid transparent;
    border-top: 5px solid #000;
}

.tri-ico {
    width: 12px;
    height: 12px;
    margin-left: 10px;
}

.spin-off {
    width: 47px;
    height: 21px;
    margin-left: 2px;
    background-color: #d4d0c8;
    border: 1px solid #8a8780;
    color: #9a9a9a;
}

.spin-off .spin-val {
    line-height: 19px;
}

.spin-off .up {
    border-bottom-color: #8a8a8a;
}

.spin-off .down {
    border-top-color: #8a8a8a;
}

.wrap-ico {
    margin-left: 1px;
}

.pen-ico {
    width: 14px;
    height: 16px;
    margin-left: 2px;
}

.comb1 {
    margin-left: 1px;
}

.comb2 {
    margin-left: 9px;
}

.nodes-ico {
    margin-left: 1px;
}

/* workspace */
.workspace {
    height: 583px;
    flex: none;
    display: flex;
    padding-top: 1px;
}

.toolbox {
    width: 30px;
    flex: none;
    padding: 7px 0 0 2px;
    border-right: 1px solid #8f8c84;
    display: flex;
    flex-direction: column;
    align-items: center;
}

.tool {
    position: relative;
    width: 26px;
    height: 25.8px;
    flex: none;
    display: flex;
    align-items: center;
    justify-content: center;
}

.tool-on {
    width: 24px;
    height: 24px;
    background-color: #ece9e2;
    border: 1px solid;
    border-color: #555 #fff #fff #555;
}

.tool-first {
    margin-top: 3px;
}

.fly::after {
    content: "";
    position: absolute;
    right: 1px;
    bottom: 2px;
    border-left: 6px solid transparent;
    border-bottom: 6px solid #000;
}

.tool-text {
    font-size: 16px;
    font-weight: bold;
    color: #55576c;
}

.drawing {
    width: 759px;
    flex: none;
    display: flex;
    flex-direction: column;
}

.ruler-top {
    width: 759px;
    height: 21px;
}

.ruler-nums text {
    font-size: 10px;
    text-anchor: middle;
    fill: #111;
}

.ruler-nums .unit {
    font-size: 10px;
}

.draw-mid {
    flex: 1;
    display: flex;
}

.ruler-left {
    width: 21px;
    height: 561px;
}

.draw-right {
    flex: 1;
    display: flex;
    flex-direction: column;
}

.draw-main {
    height: 544px;
    display: flex;
    padding-right: 2px;
}

.canvas {
    width: 720px;
    height: 544px;
    background-color: #fff;
}

.vscroll {
    width: 16px;
    display: flex;
    flex-direction: column;
}

.sb-btn {
    width: 16px;
    height: 15px;
    flex: none;
    background-color: #d4d0c8;
    border: 1px solid;
    border-color: #fff #808080 #808080 #fff;
    display: flex;
    align-items: center;
    justify-content: center;
}

.sb-btn-first {
    margin-top: 1px;
    height: 14px;
}

.hatch {
    display: block;
    background: repeating-conic-gradient(#d4d0c8 0 25%, #fff 0 50%) 0 0 / 2px 2px;
}

.hatch-a {
    height: 156px;
}

.hatch-b {
    height: 144px;
}

.thumb {
    display: block;
    flex: none;
    background-color: #d4d0c8;
    border: 1px solid;
    border-color: #fff #404040 #404040 #fff;
}

.thumb-v {
    height: 214px;
}

.arr-up {
    border-left: 4px solid transparent;
    border-right: 4px solid transparent;
    border-bottom: 4px solid #000;
}

.arr-down {
    border-left: 4px solid transparent;
    border-right: 4px solid transparent;
    border-top: 4px solid #000;
}

.arr-left {
    border-top: 4px solid transparent;
    border-bottom: 4px solid transparent;
    border-right: 4px solid #000;
}

.arr-right {
    border-top: 4px solid transparent;
    border-bottom: 4px solid transparent;
    border-left: 4px solid #000;
}

.arr-left.arr-grey {
    border-right-color: #7a7a7a;
    border-top-width: 5px;
    border-bottom-width: 5px;
    border-right-width: 6px;
}

.arr-right.arr-grey {
    border-left-color: #7a7a7a;
    border-top-width: 5px;
    border-bottom-width: 5px;
    border-left-width: 6px;
}

.bar {
    width: 1px;
    height: 10px;
    background-color: #555;
}

/* page strip under the canvas */
.pagebar {
    height: 17px;
    flex: none;
    width: 738px;
    display: flex;
    align-items: center;
    border-top: 1px solid #8f8c84;
}

.page-ico {
    width: 12px;
    height: 14px;
    margin-left: 1px;
}

.page-ico2 {
    margin-left: 3px;
}

.nav-first {
    display: flex;
    align-items: center;
    gap: 1px;
    margin-left: 7px;
    width: 12px;
}

.nav-prev {
    margin-left: 6px;
}

.page-count {
    width: 71px;
    margin-left: 9px;
    padding-left: 16px;
    font-size: 12px;
    word-spacing: 1px;
}

.nav-last {
    display: flex;
    align-items: center;
    gap: 1px;
    margin-left: 8px;
    width: 12px;
}

.page-tab {
    width: 53px;
    height: 16px;
    margin-left: 2px;
    background-color: #fff;
    clip-path: polygon(0 0, 44px 0, 53px 8px, 53px 100%, 0 100%);
    font-size: 12px;
    text-align: center;
    line-height: 15px;
    padding-right: 6px;
}

.grip {
    width: 5px;
    height: 12px;
    margin-left: 142px;
    border-left: 2px solid #fff;
    border-right: 2px solid #8f8c84;
}

.hs-btn {
    width: 16px;
    height: 16px;
    background-color: #d4d0c8;
    display: flex;
    align-items: center;
    justify-content: center;
    margin-left: 3px;
}

.hatch-c {
    width: 102px;
    height: 16px;
}

.thumb-h {
    width: 124px;
    height: 16px;
}

.hatch-d {
    width: 92px;
    height: 16px;
}

.hatch-d + .hs-btn {
    margin-left: 0;
}

.zoom-ctl {
    width: 15px;
    height: 15px;
}

/* hints docker */
.docker {
    width: 214px;
    flex: none;
    display: flex;
    flex-direction: column;
    border-right: 1px solid #a09d95;
}

.docker-head {
    height: 23px;
    flex: none;
    display: flex;
    align-items: center;
    padding-left: 8px;
    background-color: #b3b1a9;
    border-bottom: 1px solid #8f8c84;
    color: #55554f;
}

.docker-title {
    font-size: 12px;
    color: #000;
}

.ctl-more {
    margin-left: auto;
    font-size: 17px;
    line-height: 17px;
    margin-right: 9px;
}

.ctl-up {
    border-left: 5px solid transparent;
    border-right: 5px solid transparent;
    border-bottom: 5px solid #55554f;
    margin-right: 10px;
}

.ctl-x {
    font-size: 18px;
    line-height: 18px;
    margin-right: 5px;
    font-weight: bold;
}

.docker-body {
    flex: 1;
    display: flex;
    padding: 2px 0 0 4px;
}

.panel {
    width: 184px;
    flex: none;
    display: flex;
    flex-direction: column;
    background-color: #fff;
    padding: 0 2px;
    height: 557px;
}

.hints-head {
    height: 29px;
    flex: none;
    display: flex;
    align-items: center;
    padding: 0 5px 0 2px;
    border-bottom: 1px solid #0000c8;
}

.hints-word {
    color: #ff9a1f;
    font-size: 20px;
    font-weight: bold;
    line-height: 28px;
}

.book {
    width: 16px;
    height: 16px;
    margin-left: auto;
}

.hints-main {
    flex: 1;
    min-height: 0;
    margin-top: 1px;
    display: flex;
}

.hints-text {
    width: 164px;
    flex: none;
    overflow: hidden;
    padding-top: 8px;
    font-size: 11px;
    line-height: 14px;
    white-space: nowrap;
}

.hints-text h2 {
    font-size: 13px;
    line-height: 14px;
    padding-left: 2px;
    margin-bottom: 7px;
    letter-spacing: 0.3px;
}

.hints-text ul {
    list-style: none;
}

.hints-text li {
    position: relative;
    padding-left: 15px;
    margin-bottom: 2px;
}

.hints-text li::before {
    content: "";
    position: absolute;
    left: 4px;
    top: 5px;
    width: 3px;
    height: 3px;
    border-radius: 50%;
    background-color: #000;
}

.diagram {
    width: 164px;
}

.diagram-move {
    height: 153px;
    margin-top: -2px;
}

.diagram-scale {
    height: 107px;
    margin-top: -2px;
}

.panel-scroll {
    width: 16px;
    flex: none;
    display: flex;
    flex-direction: column;
    height: 502px;
}

.sb-btn-top {
    height: 14px;
    margin-bottom: 2px;
}

.thumb-p {
    height: 239px;
}

.hatch-p {
    flex: 1;
}

.panel-nav {
    height: 24px;
    flex: none;
    margin: 0 -2px;
    background-color: #d4d0c8;
    display: flex;
    justify-content: flex-start;
}

.nav-btn {
    width: 23px;
    height: 23px;
    border: 1px solid;
    border-color: #fff #8f8c84 #8f8c84 #fff;
    display: flex;
    align-items: center;
    justify-content: center;
}

.nav-home {
    margin-right: 113px;
}

.nav-btn svg {
    width: 18px;
    height: 14px;
}

.nav-home svg {
    height: 18px;
}

.dock-tabs {
    width: 24px;
    flex: none;
    margin-left: 1px;
    padding-top: 2px;
    display: flex;
    flex-direction: column;
}

.dock-tab {
    width: 22px;
    display: flex;
    flex-direction: column;
    align-items: center;
    border: 1px solid #a09d95;
    border-left: none;
    border-radius: 0 6px 6px 0;
}

.tab-mgr {
    height: 81px;
    padding-top: 2px;
}

.tab-hint {
    height: 74px;
    margin-top: 2px;
    padding-top: 2px;
    background-color: #e0ddd6;
}

.tab-ico {
    width: 16px;
    height: 16px;
}

.help-ico {
    display: flex;
    height: 16px;
    font-size: 12px;
    line-height: 12px;
    color: #5c5e7c;
}

.help-ico svg {
    width: 11px;
    height: 16px;
}

.tab-text {
    writing-mode: vertical-rl;
    text-orientation: sideways;
    font-size: 11px;
    line-height: 14px;
    margin-top: 6px;
    color: #33354a;
}

.tab-close {
    width: 16px;
    height: 16px;
    margin-top: 9px;
    border: 1px solid #8f8c84;
    background-color: #ece9e2;
}

.tab-close svg {
    width: 14px;
    height: 14px;
}

/* colour palette */
.palette {
    width: 21px;
    flex: none;
    display: flex;
    flex-direction: column;
    align-items: center;
    padding: 2px 0 0 1px;
}

.pal-lines {
    display: block;
    width: 15px;
    height: 4px;
    border-top: 1px solid #555;
    border-bottom: 1px solid #555;
}

.pal-play {
    width: 13px;
    height: 13px;
    margin-top: 4px;
    border-radius: 50%;
    background-color: #fff;
    border: 1px solid #777;
    display: flex;
    align-items: center;
    justify-content: center;
}

.pal-drop {
    width: 14px;
    height: 14px;
    margin-top: 3px;
}

.pal-up {
    margin-top: 10px;
    border-left: 4px solid transparent;
    border-right: 4px solid transparent;
    border-bottom: 5px solid #999;
}

.swatch-none {
    display: block;
    width: 17px;
    height: 17px;
    margin-top: 6px;
    background: linear-gradient(45deg, #fff 47%, #000 47%, #000 53%, #fff 53%), #fff;
    border: 1px solid #000;
    position: relative;
    overflow: hidden;
}

.swatch-none::after {
    content: "";
    position: absolute;
    inset: 0;
    background: linear-gradient(-45deg, transparent 47%, #000 47%, #000 53%, transparent 53%);
}

.swatches {
    display: flex;
    flex-direction: column;
}

.swatches span {
    display: block;
    width: 17px;
    height: 17px;
    border-bottom: 1px solid #8f8c84;
}

.c01 { background-color: #231815; }
.c02 { background-color: #3e3a39; }
.c03 { background-color: #595757; }
.c04 { background-color: #727171; }
.c05 { background-color: #898989; }
.c06 { background-color: #9fa0a0; }
.c07 { background-color: #b5b5b6; }
.c08 { background-color: #c9caca; }
.c09 { background-color: #dcdddd; }
.c10 { background-color: #efefef; }
.c11 { background-color: #ffffff; }
.c12 { background-color: #1d2088; }
.c13 { background-color: #00a0e9; }
.c14 { background-color: #009944; }
.c15 { background-color: #fff100; }
.c16 { background-color: #e60012; }
.c17 { background-color: #e4007f; }
.c18 { background-color: #a93f82; }
.c19 { background-color: #f08300; }
.c20 { background-color: #f5b1aa; }
.c21 { background-color: #8a7568; }
.c22 { background-color: #ccc9e0; }
.c23 { background-color: #a59aca; }
.c24 { background-color: #7389c4; }
.c25 { background-color: #7a6aad; }
.c26 { background-color: #8f82ad; }
.c27 { background-color: #4f628f; }

.pal-down {
    margin-top: 6px;
    border-left: 4px solid transparent;
    border-right: 4px solid transparent;
    border-top: 5px solid #000;
}

.pal-end {
    display: flex;
    align-items: center;
    margin-top: 10px;
    gap: 1px;
}

/* status bar */
.status {
    height: 46px;
    flex: none;
    border-top: 1px solid #fff;
    box-shadow: inset 0 -1px 0 #9d9a92;
    font-size: 12px;
    display: flex;
    flex-direction: column;
}

.status-row {
    height: 22px;
    display: flex;
    align-items: center;
}

.coords {
    width: 120px;
    padding-left: 5px;
    font-size: 11px;
    letter-spacing: 0.1px;
}

.st-arr {
    border-top-width: 5px;
    border-bottom-width: 5px;
    border-left-width: 5px;
}

.obj-info {
    margin-left: 243px;
    width: 403px;
    white-space: nowrap;
}

.scope {
    width: 16px;
    height: 16px;
}

.st-tick {
    width: 1px;
    height: 12px;
    margin-left: 25px;
    background-color: #a09d95;
}

.st-bucket {
    width: 18px;
    height: 18px;
    margin-left: 2px;
}

.st-none {
    width: 18px;
    height: 18px;
    margin-left: 3px;
    border: 1px solid #555;
    background:
        linear-gradient(45deg, transparent 47%, #000 47%, #000 53%, transparent 53%),
        linear-gradient(-45deg, #fff 47%, #000 47%, #000 53%, #fff 53%);
}

.st-val {
    margin-left: 3px;
    white-space: nowrap;
}

.profile {
    width: 505px;
    padding-left: 5px;
    white-space: nowrap;
}

.lat {
    font-size: 11px;
    letter-spacing: -0.25px;
}

.st-pen {
    width: 14px;
    height: 16px;
    margin-left: 306px;
}

.st-black {
    width: 18px;
    height: 18px;
    margin-left: 6px;
    background-color: #231815;
    border: 1px solid #777;
}

.st-cmyk {
    font-size: 11px;
    letter-spacing: -0.1px;
}

/* windows taskbar */
.taskbar {
    height: 30px;
    flex: none;
    display: flex;
    align-items: center;
    padding: 2px 2px 0 3px;
    border-top: 1px solid #fff;
}

.start {
    width: 45px;
    height: 22px;
    flex: none;
    display: flex;
    align-items: center;
    gap: 3px;
    padding-left: 2px;
    font-size: 12px;
    white-space: nowrap;
    border: 1px solid;
    border-color: #fff #404040 #404040 #fff;
}

.flag {
    width: 15px;
    height: 15px;
}

.quick {
    width: 16px;
    height: 16px;
}

.q1 {
    margin-left: 9px;
}

.q2 {
    margin-left: 6px;
}

.q3 {
    margin-left: 8px;
}

.more {
    margin-left: 12px;
    font-size: 14px;
    font-weight: bold;
    line-height: 14px;
    align-self: flex-start;
    margin-top: 3px;
    width: 10px;
}

.task {
    width: 159px;
    height: 22px;
    margin-left: 2px;
    display: flex;
    align-items: center;
    gap: 3px;
    padding-left: 4px;
    border: 1px solid;
    border-color: #404040 #fff #fff #404040;
    background: repeating-conic-gradient(#d4d0c8 0 25%, #fff 0 50%) 0 0 / 2px 2px;
}

.task-logo {
    width: 16px;
    height: 16px;
}

.task-text {
    font-family: "Liberation Mono", "Noto Sans CJK SC", monospace;
    font-size: 11px;
    letter-spacing: -0.6px;
    white-space: nowrap;
}

.kbd {
    width: 16px;
    height: 16px;
    margin-left: auto;
}

.tray-sep {
    width: 2px;
    height: 20px;
    margin-left: 5px;
    background-color: #fff;
    border-left: 1px solid #8f8c84;
}

.tray {
    width: 37px;
    height: 22px;
    margin-left: 5px;
    display: flex;
    align-items: center;
    gap: 2px;
    padding-left: 4px;
    border: 1px solid;
    border-color: #8f8c84 #fff #fff #8f8c84;
    font-weight: bold;
    font-size: 13px;
}

.net {
    width: 15px;
    height: 15px;
}
```
